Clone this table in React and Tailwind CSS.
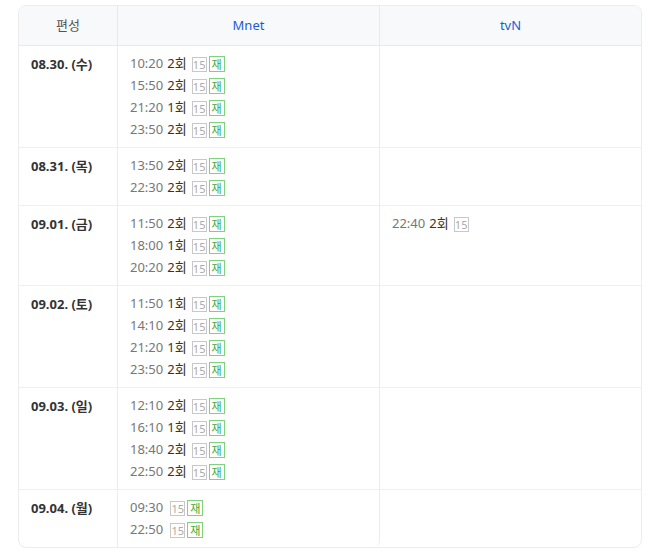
import React from 'react';

const rows = [
  { date: '08.30. (수)', mnet: [['10:20', '2회'], ['15:50', '2회'], ['21:20', '1회'], ['23:50', '2회']], tvn: [] },
  { date: '08.31. (목)', mnet: [['13:50', '2회'], ['22:30', '2회']], tvn: [] },
  { date: '09.01. (금)', mnet: [['11:50', '2회'], ['18:00', '1회'], ['20:20', '2회']], tvn: [['22:40', '2회', true]] },
  { date: '09.02. (토)', mnet: [['11:50', '1회'], ['14:10', '2회'], ['21:20', '1회'], ['23:50', '2회']], tvn: [] },
  { date: '09.03. (일)', mnet: [['12:10', '2회'], ['16:10', '1회'], ['18:40', '2회'], ['22:50', '2회']], tvn: [] },
  { date: '09.04. (월)', mnet: [['09:30', ''], ['22:50', '']], tvn: [] },
];

const Slot = ({ time, ep, noRe }) => (
  <div className="flex items-center h-[22px]">
    <span className="text-[#777]">{time}</span>
    {ep && <span className="ml-[4px] text-[#333]">{ep}</span>}
    <span className={`${ep ? 'ml-[5px]' : 'ml-[7px]'} inline-flex items-center justify-center w-[15px] h-[15px] border border-[#c8c8c8] text-[11px] leading-none text-[#aaa]`}>15</span>
    {!noRe && (
      <span className="ml-[2px] inline-flex items-center justify-center w-[16px] h-[16px] border border-[#7fd37f] text-[11px] leading-none text-[#33aa33]">재</span>
    )}
  </div>
);

export default function App() {
  return (
    <div className="min-h-[554px] bg-white pt-[5px] pl-[18px]" style={{ fontFamily: '"Noto Sans", "Noto Sans CJK KR", sans-serif' }}>
      <div className="w-[624px] border border-[#ececec] rounded-lg overflow-hidden text-[13px]">
        <div className="grid grid-cols-[99px_262px_1fr] bg-[#f8f9fb] border-b border-[#e8e9ec] h-[40px]">
          <div className="flex items-center justify-center text-[#555] border-r border-[#e8e9ec]">편성</div>
          <div className="flex items-center justify-center text-[#1c5ad8] border-r border-[#e8e9ec]">Mnet</div>
          <div className="flex items-center justify-center text-[#1c5ad8]">tvN</div>
        </div>
        {rows.map((r, i) => {
          const last = i === rows.length - 1;
          return (
            <div key={r.date} className={`grid grid-cols-[99px_262px_1fr] ${last ? '' : 'border-b border-[#efefef]'}`}>
              <div className="border-r border-[#ececec] pl-[12px] pt-[7px] pb-[6px] leading-[22px] font-bold text-[#333]">{r.date}</div>
              <div className={`border-r border-[#ececec] pl-[12px] pt-[7px] pb-[6px] ${last ? 'rounded-br-[6px]' : ''}`}>
                {r.mnet.map(([t, e]) => <Slot key={t} time={t} ep={e} />)}
              </div>
              <div className="pl-[12px] pt-[7px] pb-[6px]">
                {r.tvn.map(([t, e, n]) => <Slot key={t} time={t} ep={e} noRe={n} />)}
              </div>
            </div>
          );
        })}
      </div>
    </div>
  );
}
